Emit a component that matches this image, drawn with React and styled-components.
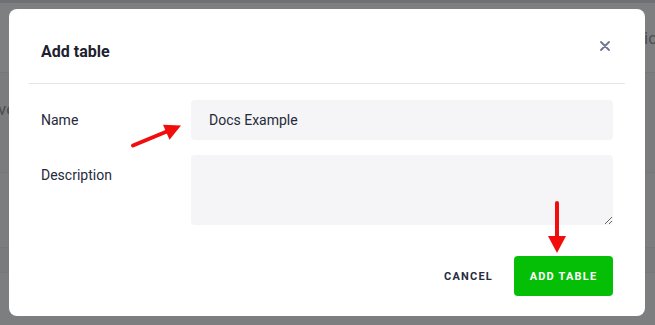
import React from 'react';
import styled, { createGlobalStyle } from 'styled-components';

const GlobalStyle = createGlobalStyle`
  html, body {
    margin: 0;
    padding: 0;
    width: 655px;
    height: 325px;
    overflow: hidden;
    font-family: Roboto, "Liberation Sans", sans-serif;
  }
`;

const Backdrop = styled.div`
  position: relative;
  width: 655px;
  height: 325px;
  box-sizing: border-box;
  background: #7d7e80;
  border-top: 3px solid #6f7073;
  padding: 6px 10px 9px 9px;
  display: flex;
`;

const PageBehind = styled.div`
  position: absolute;
  inset: 3px 0 0 0;
  display: grid;
  grid-template-rows: 67px 100px 75px 25px 1fr;
  pointer-events: none;
`;

const BehindBand = styled.div`
  border-bottom: 1px solid #76777a;
  background: ${p => p.$shade};
`;

const BehindText = styled.span`
  position: absolute;
  font-size: 17px;
  color: #4d4e52;
  left: ${p => p.$left}px;
  top: ${p => p.$top}px;
`;

const Modal = styled.div`
  position: relative;
  flex: 1;
  background: #ffffff;
  border-radius: 8px;
  display: flex;
  flex-direction: column;
`;

const Header = styled.div`
  margin: 0 20px;
  height: 75px;
  box-sizing: border-box;
  padding: 10px 15px 0 12px;
  border-bottom: 1px solid #e4e5ea;
  display: flex;
  align-items: center;
  justify-content: space-between;
`;

const Title = styled.h2`
  margin: 0;
  font-size: 16px;
  font-weight: 700;
  color: #1d2130;
`;

const CloseButton = styled.button`
  border: 0;
  background: none;
  padding: 0;
  margin-bottom: 10px;
  width: 10px;
  height: 10px;
  display: flex;
  cursor: pointer;
`;

const Form = styled.div`
  padding: 16px 32px 0 32px;
  display: grid;
  grid-template-columns: 150px 1fr;
  row-gap: 15px;
`;

const Label = styled.label`
  font-size: 14px;
  line-height: 40px;
  color: #262a3b;
`;

const Field = styled.input`
  height: 40px;
  box-sizing: border-box;
  border: 0;
  border-radius: 4px;
  background: #f5f5f7;
  padding: 0 18px;
  font-family: inherit;
  font-size: 14px;
  color: #262a3b;
  outline: none;
`;

const Area = styled.textarea`
  height: 70px;
  box-sizing: border-box;
  border: 0;
  border-radius: 4px;
  background: #f5f5f7;
  padding: 10px 18px;
  font-family: inherit;
  font-size: 14px;
  outline: none;
  resize: vertical;
`;

const Footer = styled.div`
  display: flex;
  justify-content: flex-end;
  align-items: center;
  gap: 21px;
  padding: 31px 32px 0 0;
`;

const Button = styled.button`
  height: 40px;
  border: 0;
  border-radius: 4px;
  padding: 0;
  width: ${p => (p.$primary ? '99px' : 'auto')};
  background: ${p => (p.$primary ? '#05be06' : 'transparent')};
  color: ${p => (p.$primary ? '#ffffff' : '#272b3e')};
  font-family: inherit;
  font-size: 11px;
  font-weight: 700;
  letter-spacing: 1.2px;
  text-transform: uppercase;
  cursor: pointer;
`;

const Annotation = styled.svg`
  position: absolute;
  left: 0;
  top: 0;
  pointer-events: none;
`;

export default function App() {
  return (
    <>
      <GlobalStyle />
      <Backdrop>
        <PageBehind>
          <BehindBand $shade="#7e7f81" />
          <BehindBand $shade="#7b7c7e" />
          <BehindBand $shade="#7c7d7f" />
          <BehindBand $shade="#7a7b7d" />
          <div />
          <BehindText $left={-2} $top={93}>ve</BehindText>
          <BehindText $left={644} $top={22}>ic</BehindText>
        </PageBehind>
        <Modal>
          <Header>
            <Title>Add table</Title>
            <CloseButton aria-label="Close">
              <svg width="10" height="10" viewBox="0 0 10 10">
                <path d="M1 1 L9 9 M9 1 L1 9" stroke="#6f7590" strokeWidth="1.8" strokeLinecap="round" />
              </svg>
            </CloseButton>
          </Header>
          <Form>
            <Label>Name</Label>
            <Field defaultValue="Docs Example" />
            <Label>Description</Label>
            <Area />
          </Form>
          <Footer>
            <Button>Cancel</Button>
            <Button $primary>Add table</Button>
          </Footer>
        </Modal>
        <Annotation width="655" height="325" viewBox="0 0 655 325">
          <line x1="133" y1="142.5" x2="168" y2="128" stroke="#f20d0d" strokeWidth="4" strokeLinecap="round" />
          <polygon points="181,122.5 163,121.8 169.5,136.8" fill="#f20d0d" />
          <line x1="557" y1="200" x2="557" y2="236" stroke="#f20d0d" strokeWidth="4" strokeLinecap="round" />
          <polygon points="548,233 566,233 557,250" fill="#f20d0d" />
        </Annotation>
      </Backdrop>
    </>
  );
}
